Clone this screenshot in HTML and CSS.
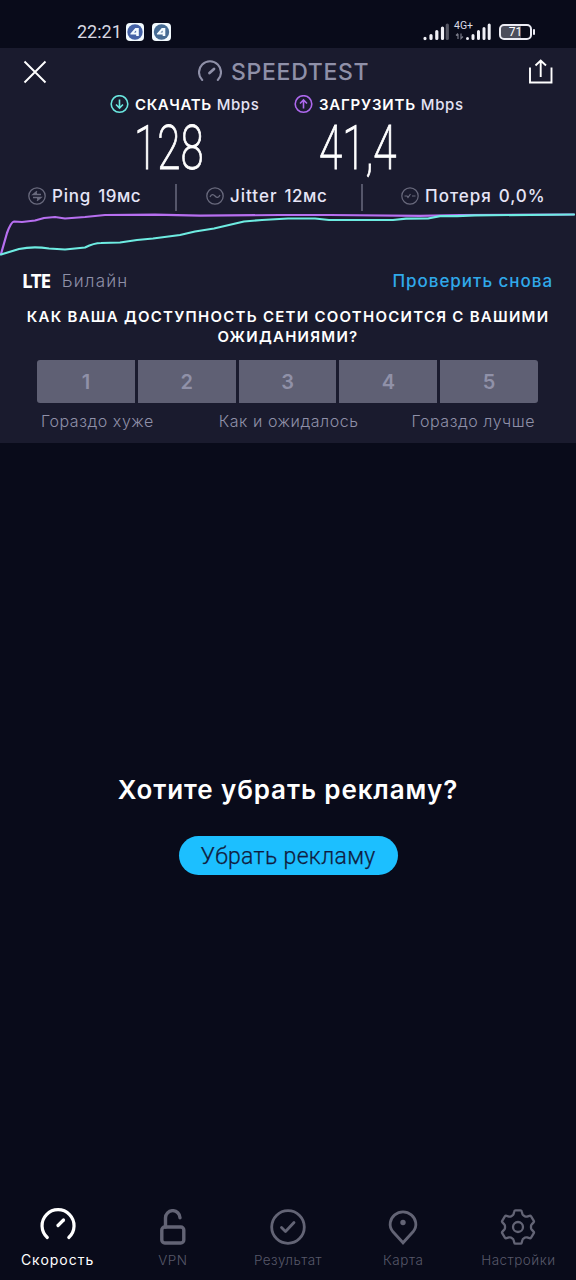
FILE: index.html
```html
<!DOCTYPE html>
<html lang="ru">
<head>
<meta charset="utf-8">
<title>Speedtest</title>
<link rel="stylesheet" href="styles.css">
</head>
<body>
<div class="status">
  <span class="clock">22:21</span>
  <svg class="app" width="18" height="18" viewBox="0 0 18 18"><rect width="18" height="18" rx="4" fill="#f3fbff"/><circle cx="9" cy="9" r="7.700" fill="#4562a6"/><path d="M4.300 10.700 9.300 5h3.500v8h-2.600v-1.500H4.500z" fill="#f3fbff"/><path d="M8 9.500 10.100 7.500v2z" fill="#4562a6"/></svg>
  <svg class="app second" width="19" height="18" viewBox="0 0 19 18"><rect width="19" height="18" rx="4" fill="#f3fbff"/><circle cx="9.500" cy="9" r="7.700" fill="#456b93"/><path d="M4.800 10.700 9.800 5h3.500v8h-2.600v-1.500H5z" fill="#f3fbff"/><path d="M8.500 9.500 10.600 7.500v2z" fill="#456b93"/></svg>
  <svg class="signal" width="26" height="18" viewBox="0 0 26 18" stroke="#f0f0f6" stroke-width="3.200" stroke-linecap="round"><path d="M2 15.400v.2M8 12.500v3M13.800 8.500v7M19.500 5v10.500"/><path d="M24.300 2v13.500" stroke="#555663"/></svg>
  <div class="network">
    <span class="g4">4G+</span>
    <svg width="37" height="18" viewBox="0 0 37 18" fill="none"><path d="M4 16v-5M2 12.500l2-2M7 10.500v5l2-2" stroke="#777886" stroke-width="1.200"/><path d="M13.500 15.400v.2M19 12.500v3M24.500 8.500v7M30 5.500v10M35.200 2v13.500" stroke="#f0f0f6" stroke-width="3" stroke-linecap="round"/></svg>
  </div>
  <div class="battery"><span>71</span></div>
</div>

<main class="panel">
  <header class="header">
    <svg class="close" width="24" height="24" viewBox="0 0 24 24" stroke="#fff" stroke-width="1.900"><path d="M1.500 1.500 22.500 22.500M22.500 1.500 1.500 22.500"/></svg>
    <svg class="gauge" width="24" height="23" viewBox="0 0 24 23" fill="none" stroke="#8f90a8" stroke-width="2.100" stroke-linecap="round"><path d="M4.200 20A11 11 0 1 1 19.800 20"/><path d="M11.500 13 16 9" stroke-width="2.800"/></svg>
    <span class="brand">SPEEDTEST</span>
    <svg class="share" width="24" height="25" viewBox="0 0 24 25" fill="none" stroke="#fff" stroke-width="1.900"><path d="M1 8.500V23.500H22.500V8.500M11.700 18V2M6.500 6.500 11.700 1.500 17 6.500"/></svg>
  </header>

  <section class="results">
    <div class="result down">
      <div class="label">
        <svg width="19" height="19" viewBox="0 0 19 19" fill="none" stroke="#6ae6df" stroke-width="1.600"><circle cx="9.500" cy="9" r="8.300"/><path d="M9.500 4.500V13M6 9.500l3.500 3.500L13 9.500"/></svg>
        <b>СКАЧАТЬ</b><span>Mbps</span>
      </div>
      <div class="value">128</div>
    </div>
    <div class="result up">
      <div class="label">
        <svg width="19" height="19" viewBox="0 0 19 19" fill="none" stroke="#ad68ed" stroke-width="1.600"><circle cx="9.500" cy="9" r="8.300"/><path d="M9.500 13.500V5M6 8.500 9.500 5 13 8.500"/></svg>
        <b>ЗАГРУЗИТЬ</b><span>Mbps</span>
      </div>
      <div class="value">41,4</div>
    </div>
  </section>

  <section class="stats">
    <div class="stat ping">
      <svg width="18" height="18" viewBox="0 0 18 18" fill="none" stroke="#696a7d" stroke-width="1.300"><circle cx="9" cy="9" r="8.200"/><path d="M13 7.500H5L9 4.300M5 10.500h8L9 13.700M6.500 6.200H9M9 11.800h2.500"/></svg>
      <span class="name">Ping</span><span class="num">19мс</span>
    </div>
    <div class="stat jitter">
      <svg width="18" height="18" viewBox="0 0 18 18" fill="none" stroke="#696a7d" stroke-width="1.300"><circle cx="9" cy="9" r="8.200"/><path d="M4 10c1.500-3 3.200-3 5-1s3.500 2 5-1"/></svg>
      <span class="name">Jitter</span><span class="num">12мс</span>
    </div>
    <div class="stat loss">
      <svg width="18" height="18" viewBox="0 0 18 18" fill="none" stroke="#696a7d" stroke-width="1.200"><circle cx="9" cy="9" r="8.200"/><path d="M3.500 9H6l1 1.500L9.500 7M11 9h3.500"/></svg>
      <span class="name">Потеря</span><span class="num">0,0%</span>
    </div>
  </section>

  <svg class="chart" width="576" height="48" viewBox="0 211 576 48" fill="none" stroke-width="2.200" stroke-linecap="round" stroke-linejoin="round">
    <path stroke="#b76ff0" d="M1 254 7 233Q11 222 14 221.500L22 222 35 220.500 44 218 55 217 65 218.500 85 217 105 215 155 214.700 200 215.700 280 215 330 215 420 215.800 460 215 574 214.500"/>
    <path stroke="#6eece2" d="M1 254.500 19 249Q33 246 49 248.500L65 249.500 85 247.500Q94 243 101 243L120 242.500 137 240 153 238.500 180 235 195 231.500 214 228.500 244 221.500 262 220 288 218.500 315 218.500 329 220 393 220 406 218.700 428 218.500 440 216.200 457 216.200 475 215.300 574 214.500"/>
  </svg>

  <section class="provider">
    <b class="lte">LTE</b><span class="carrier">Билайн</span><span class="again">Проверить снова</span>
  </section>

  <h2 class="question">КАК ВАША ДОСТУПНОСТЬ СЕТИ СООТНОСИТСЯ С ВАШИМИ<br>ОЖИДАНИЯМИ?</h2>
  <div class="scale"><span>1</span><span>2</span><span>3</span><span>4</span><span>5</span></div>
  <div class="hints"><span>Гораздо хуже</span><span class="expected">Как и ожидалось</span><span>Гораздо лучше</span></div>
</main>

<section class="ad">
  <h1 class="offer">Хотите убрать рекламу?</h1>
  <div class="remove"><span>Убрать рекламу</span></div>
</section>

<nav class="nav">
  <div class="tab active">
    <svg width="36" height="36" viewBox="0 0 36 36" fill="none" stroke="#fff" stroke-width="3.200" stroke-linecap="round"><path d="M7.300 30.500A16 16 0 1 1 28.800 30.500"/><path d="M18 18.500 23.500 13"/></svg>
    <span>Скорость</span>
  </div>
  <div class="tab">
    <svg width="36" height="36" viewBox="0 0 36 36" fill="none" stroke="#636475" stroke-width="3.400" stroke-linecap="round"><rect x="6.800" y="18" width="22" height="16" rx="3"/><path d="M10.500 18V9a7.200 7.200 0 0 1 14.500-.2"/></svg>
    <span>VPN</span>
  </div>
  <div class="tab">
    <svg width="36" height="36" viewBox="0 0 36 36" fill="none" stroke="#636475" stroke-width="2.800" stroke-linecap="round" stroke-linejoin="round"><circle cx="18" cy="18" r="16.300"/><path d="M11.500 18.500l4 4 8.500-9"/></svg>
    <span>Результат</span>
  </div>
  <div class="tab">
    <svg width="36" height="36" viewBox="0 0 36 36" fill="none" stroke="#636475" stroke-width="2.800"><path d="M18 33.800 8 22.800C5.200 19.500 4.800 16.500 5.300 13.500a12.900 12.900 0 0 1 25.400 0c.5 3 .1 6-2.700 9.300z"/><circle cx="18" cy="13.500" r="2.700" fill="#636475" stroke="none"/></svg>
    <span>Карта</span>
  </div>
  <div class="tab">
    <svg width="36" height="36" viewBox="0 0 36 36" fill="none" stroke="#636475" stroke-width="2.300" stroke-linejoin="round"><path d="M15.500 1.300h5q1 0 1.200 1l.7 2.700q.2 1 1.200 1.500l1.500.9q.9.500 1.900.2l2.500-.8q1-.3 1.600.6l2.700 4.400q.5.900-.2 1.600l-1.900 2q-.7.700-.7 1.700v1.800q0 1 .7 1.700l1.900 2q.7.700.2 1.600l-2.700 4.400q-.6.900-1.600.6l-2.500-.8q-1-.3-1.900.2l-1.500.9q-1 .5-1.200 1.500l-.7 2.700q-.2 1-1.200 1h-5q-1 0-1.200-1l-.7-2.700q-.2-1-1.200-1.500l-1.500-.9q-.9-.5-1.900-.2l-2.500.8q-1 .3-1.600-.6l-2.700-4.400q-.5-.9.200-1.600l1.900-2q.7-.7.700-1.700v-1.800q0-1-.7-1.700l-1.900-2q-.7-.7-.2-1.600l2.700-4.400q.6-.9 1.600-.6l2.500.8q1 .3 1.900-.2l1.500-.9q1-.5 1.200-1.500l.7-2.700q.2-1 1.200-1z"/><circle cx="18" cy="18" r="5"/></svg>
    <span>Настройки</span>
  </div>
</nav>
</body>
</html>
```
FILE: styles.css
```css
* { box-sizing: border-box; }
html, body { margin: 0; }
body {
  width: 576px; height: 1280px; overflow: hidden;
  display: flex; flex-direction: column;
  background: #090b1a; color: #fff;
  font-family: Inter, "Liberation Sans", sans-serif;
}
svg { display: block; flex: none; }
span, b { white-space: nowrap; }

.status { height: 48px; padding: 16px 44px 0 77px; display: flex; align-items: center; flex: none; }
.clock { width: 49px; font: 400 18px/32px Roboto, sans-serif; color: #d8d8e2; }
.second { margin-left: 8px; }
.signal { margin: 0 5px 0 auto; }
.network { position: relative; width: 37px; margin-right: 8px; }
.g4 { position: absolute; left: 0; top: -3px; font: 400 10.500px/12px Roboto, sans-serif; color: #dcdce6; }
.battery { position: relative; width: 33px; height: 16px; border: 2px solid #ececf4; border-radius: 5px; background: linear-gradient(90deg, #4c4e5c 70%, transparent 70%); text-align: center; font: 400 12px/12px Roboto, sans-serif; }
.battery::after { content: ""; position: absolute; right: -5px; top: 3px; width: 2px; height: 6px; background: #ececf4; border-radius: 1px; }

.panel { height: 395px; flex: none; background: #1a1b2e; display: flex; flex-direction: column; }
.header { height: 47px; padding: 0 23px; display: flex; align-items: center; }
.gauge { margin-left: 151px; }
.brand { margin-left: 9px; font-size: 23px; font-weight: 500; letter-spacing: .7px; color: #8f90a8; }
.share { margin-left: auto; }

.results { height: 87px; padding-left: 110px; display: flex; }
.result { width: 184px; }
.label { height: 19px; display: flex; align-items: center; font-size: 15px; }
.label b { margin-left: 6px; font-weight: 600; letter-spacing: .6px; }
.up .label b { letter-spacing: .8px; }
.label span { margin-left: 5px; font-weight: 500; letter-spacing: .6px; color: #e4e3f5; }
.value { width: 150px; margin-left: 24px; font: 200 62px/68px Roboto, sans-serif; -webkit-text-stroke: .9px #fff; transform: scaleX(.68); transform-origin: 0 50%; }
.up .value { margin-left: 25px; }

.stats { height: 29px; display: flex; }
.stat { height: 27px; margin-top: 2px; padding-bottom: 3px; display: flex; align-items: center; font-size: 17px; font-weight: 500; letter-spacing: .8px; color: #e6e5f7; }
.stat span { line-height: 20px; padding-bottom: 1px; }
.ping { width: 177px; padding-left: 28px; border-right: 2px solid #55566a; }
.jitter { width: 186px; padding-left: 29px; border-right: 2px solid #55566a; letter-spacing: 1px; }
.loss { padding-left: 38px; letter-spacing: 1px; }
.name { margin-left: 6px; }
.num { margin-left: 7px; letter-spacing: .5px; }
.loss .num { letter-spacing: .9px; }

.provider { height: 44px; padding: 0 23px 0 22px; display: flex; align-items: center; }
.lte { font: 700 19px/24px "Noto Sans", sans-serif; letter-spacing: -1.400px; }
.carrier { margin-left: 12px; font-size: 17px; font-weight: 300; letter-spacing: 1.200px; color: #8f90a8; }
.again { margin-left: auto; font-size: 17px; font-weight: 500; letter-spacing: .970px; color: #30a9ea; }

.question { margin: 4px 0 13px; text-align: center; font-size: 15px; line-height: 20px; font-weight: 600; letter-spacing: 1.260px; }
.scale { margin: 0 38px 0 37px; height: 43px; display: grid; grid-template-columns: repeat(5, 1fr); gap: 3px; border-radius: 3px; overflow: hidden; }
.scale span { background: #5f6074; color: #9091a8; display: grid; place-items: center; font-size: 20px; font-weight: 600; }
.hints { height: 36px; padding: 0 41px; display: flex; align-items: center; justify-content: space-between; font-size: 16px; font-weight: 300; letter-spacing: .540px; color: #8f90a8; }
.expected { margin-left: 12px; }

.ad { flex: 1; display: flex; flex-direction: column; align-items: center; }
.offer { margin: 330px 0 0; height: 34px; line-height: 34px; font-size: 26px; font-weight: 600; letter-spacing: .880px; }
.remove { margin-top: 29px; width: 219px; height: 39px; border-radius: 20px; background: #1cbfff; color: #101c40; text-align: center; font: 300 23px/42px Roboto, sans-serif; letter-spacing: .350px; -webkit-text-stroke: .25px #101c40; }

.nav { height: 76px; padding-bottom: 4px; display: grid; grid-template-columns: repeat(5, 1fr); color: #575869; }
.tab { display: flex; flex-direction: column; align-items: center; padding-top: 5px; font-size: 13.500px; font-weight: 300; letter-spacing: .5px; }
.tab span { margin-top: 6px; line-height: 18px; }
.active { color: #fff; padding-top: 3px; font-size: 14px; letter-spacing: 1px; }
.active span { margin-top: 8px; font-weight: 400; }
```
